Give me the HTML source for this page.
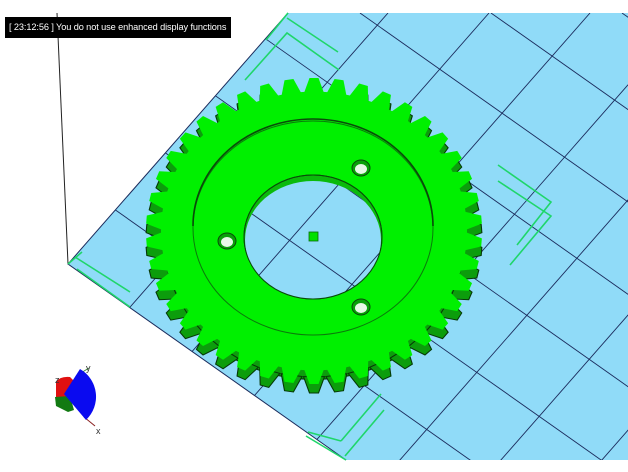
<!DOCTYPE html>
<html><head><meta charset="utf-8"><style>
html,body{margin:0;padding:0;background:#fff;width:628px;height:472px;overflow:hidden}
svg{position:absolute;left:0;top:0}
.lbl{position:absolute;left:5px;top:17px;width:226px;height:21px;background:#000;color:#fff;font-family:"Liberation Sans",sans-serif;font-size:9.2px;letter-spacing:-0.1px;line-height:21px;padding-left:4px;box-sizing:border-box;white-space:nowrap;overflow:hidden}
</style></head><body>
<svg width="628" height="472" viewBox="0 0 628 472" xmlns="http://www.w3.org/2000/svg">
<defs>
<clipPath id="pl"><polygon points="288,13 628,13 628,460 346,460 68,264"/></clipPath>
<clipPath id="bore"><ellipse cx="313" cy="240" rx="68" ry="59"/></clipPath>
<g id="grid" stroke="#1b2b5c" stroke-width="0.9">
<line x1="-426" y1="13" x2="574" y2="718"/>
<line x1="-295" y1="13" x2="705" y2="718"/>
<line x1="-164" y1="13" x2="836" y2="718"/>
<line x1="-33" y1="13" x2="967" y2="718"/>
<line x1="98" y1="13" x2="1098" y2="718"/>
<line x1="229" y1="13" x2="1229" y2="718"/>
<line x1="360" y1="13" x2="1360" y2="718"/>
<line x1="491" y1="13" x2="1491" y2="718"/>
<line x1="622" y1="13" x2="1622" y2="718"/>
<line x1="388" y1="13" x2="-12" y2="469"/>
<line x1="489" y1="13" x2="89" y2="469"/>
<line x1="590" y1="13" x2="190" y2="469"/>
<line x1="691" y1="13" x2="291" y2="469"/>
<line x1="792" y1="13" x2="392" y2="469"/>
<line x1="893" y1="13" x2="493" y2="469"/>
<line x1="994" y1="13" x2="594" y2="469"/>
<line x1="1095" y1="13" x2="695" y2="469"/>
</g>
<polygon id="t" points="-10.5,-150 -4.5,-168 4.5,-168 10.5,-150"/>
<g id="gear">
<circle r="153"/>
<use href="#t"/><use href="#t" transform="rotate(8.571)"/><use href="#t" transform="rotate(17.143)"/><use href="#t" transform="rotate(25.714)"/><use href="#t" transform="rotate(34.286)"/><use href="#t" transform="rotate(42.857)"/><use href="#t" transform="rotate(51.429)"/><use href="#t" transform="rotate(60)"/><use href="#t" transform="rotate(68.571)"/><use href="#t" transform="rotate(77.143)"/><use href="#t" transform="rotate(85.714)"/><use href="#t" transform="rotate(94.286)"/><use href="#t" transform="rotate(102.857)"/><use href="#t" transform="rotate(111.429)"/><use href="#t" transform="rotate(120)"/><use href="#t" transform="rotate(128.571)"/><use href="#t" transform="rotate(137.143)"/><use href="#t" transform="rotate(145.714)"/><use href="#t" transform="rotate(154.286)"/><use href="#t" transform="rotate(162.857)"/><use href="#t" transform="rotate(171.429)"/><use href="#t" transform="rotate(180)"/><use href="#t" transform="rotate(188.571)"/><use href="#t" transform="rotate(197.143)"/><use href="#t" transform="rotate(205.714)"/><use href="#t" transform="rotate(214.286)"/><use href="#t" transform="rotate(222.857)"/><use href="#t" transform="rotate(231.429)"/><use href="#t" transform="rotate(240)"/><use href="#t" transform="rotate(248.571)"/><use href="#t" transform="rotate(257.143)"/><use href="#t" transform="rotate(265.714)"/><use href="#t" transform="rotate(274.286)"/><use href="#t" transform="rotate(282.857)"/><use href="#t" transform="rotate(291.429)"/><use href="#t" transform="rotate(300)"/><use href="#t" transform="rotate(308.571)"/><use href="#t" transform="rotate(317.143)"/><use href="#t" transform="rotate(325.714)"/><use href="#t" transform="rotate(334.286)"/><use href="#t" transform="rotate(342.857)"/><use href="#t" transform="rotate(351.429)"/>
</g>
</defs>
<polygon points="288,13 628,13 628,460 346,460 68,264" fill="#90dbf8"/>
<g clip-path="url(#pl)"><use href="#grid"/></g>
<polyline points="288,13 68,264 346,460" fill="none" stroke="#1b2b5c" stroke-width="1"/>
<line x1="57" y1="13" x2="68" y2="264" stroke="#222" stroke-width="1"/>
<g stroke="#1fd66a" stroke-width="1.6" fill="none">
<line x1="288" y1="13" x2="266" y2="40"/>
<line x1="287" y1="18" x2="338" y2="52"/>
<polyline points="339,70 287,33 245,80"/>
<polyline points="498,165 551,202 517,245"/>
<polyline points="498,181 551,216 510,265"/>
<line x1="381" y1="394" x2="341" y2="441"/>
<line x1="384" y1="410" x2="345" y2="456"/>
<line x1="308" y1="432" x2="341" y2="441"/>
<line x1="306" y1="436" x2="346" y2="460"/>
<line x1="75" y1="257" x2="130" y2="292"/>
<line x1="77" y1="269" x2="130" y2="307"/>
<line x1="68" y1="264" x2="82" y2="252"/>
</g>
<g transform="translate(314,240) scale(1,0.911)">
<use href="#gear" fill="#0c9d0c" stroke="#063806" stroke-width="1.1"/>
</g>
<g transform="translate(314,231) scale(1,0.911)">
<use href="#gear" fill="#00f000"/>
</g>
<ellipse cx="313" cy="228" rx="120" ry="107" fill="none" stroke="#0b7a0b" stroke-width="1"/>
<path d="M193,226 A120,107 0 0 1 433,226" fill="none" stroke="#0a4a0a" stroke-width="1.6"/>
<ellipse cx="313" cy="237" rx="69" ry="62" fill="#0bba0b" stroke="#0a4a0a" stroke-width="1"/>
<ellipse cx="313" cy="240" rx="68" ry="59" fill="#90dbf8"/>
<g clip-path="url(#bore)"><use href="#grid"/></g>
<ellipse cx="313" cy="237" rx="69" ry="62" fill="none" stroke="#0a4a0a" stroke-width="1"/>
<rect x="309" y="232" width="9" height="9" fill="#00e000" stroke="#0a6a0a" stroke-width="0.8"/>
<g stroke="#0a4a0a" stroke-width="1">
<ellipse cx="361" cy="168" rx="9" ry="8" fill="#0aa00a"/>
<ellipse cx="361" cy="169" rx="6" ry="5" fill="#e8f8e8" stroke="none"/>
<ellipse cx="227" cy="241" rx="9" ry="8" fill="#0aa00a"/>
<ellipse cx="227" cy="242" rx="6" ry="5" fill="#e8f8e8" stroke="none"/>
<ellipse cx="361" cy="307" rx="9" ry="8" fill="#0aa00a"/>
<ellipse cx="361" cy="308" rx="6" ry="5" fill="#e8f8e8" stroke="none"/>
</g>
<line x1="76" y1="376" x2="89" y2="368" stroke="#3a8a3a" stroke-width="1"/>
<line x1="84" y1="417" x2="95" y2="426" stroke="#8a2020" stroke-width="1"/>
<path d="M56,382 Q60,376 70,377 L76,383 L72,398 L56,398 Z" fill="#e01010"/>
<path d="M55,397 L70,396 L74,410 L68,412 L56,406 Z" fill="#127a12"/>
<path d="M64,394 L80,369 A32,32 0 0 1 86,420 Z" fill="#0a0af0"/>
<g font-family="Liberation Sans,sans-serif" font-size="9" fill="#333">
<text x="86" y="371">y</text>
<text x="55" y="383">z</text>
<text x="96" y="434">x</text>
</g>
</svg>
<div class="lbl">[ 23:12:56 ] You do not use enhanced display functions</div>
</body></html>
